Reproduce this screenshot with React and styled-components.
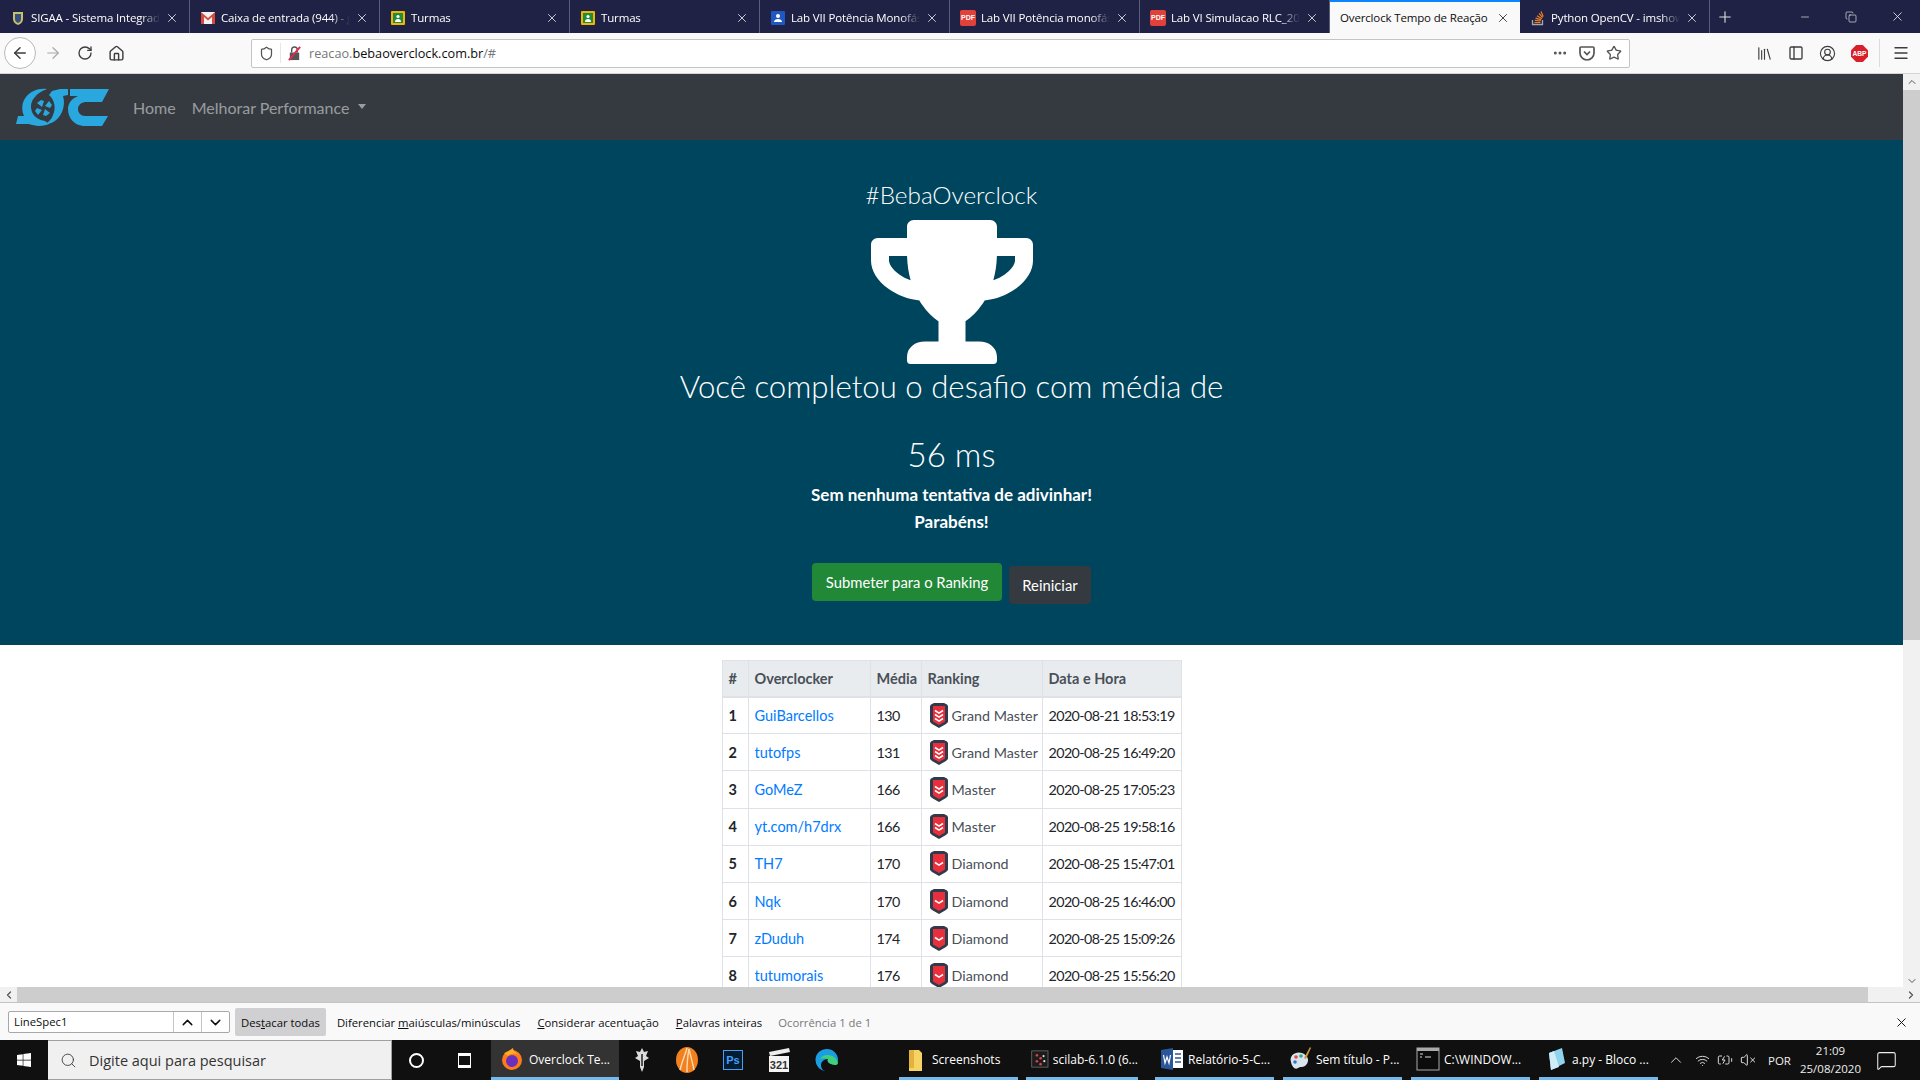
import styled, { createGlobalStyle } from "styled-components";
import { FaTrophy, FaWindows } from "react-icons/fa";
import {
    ArrowLeft,
    ArrowRight,
    RotateCw,
    Home as HomeIcon,
    Shield,
    Star,
    Ellipsis,
    Library,
    PanelLeft,
    CircleUserRound,
    Menu,
    X,
    Plus,
    Minus,
    Copy,
    ChevronUp,
    ChevronDown,
    ChevronLeft,
    ChevronRight,
    Search,
    Wifi,
    BatteryCharging,
    VolumeX,
    MessageSquare,
} from "lucide-react";

const UI_FONT = `"Open Sans", "Noto Sans", sans-serif`;
const PAGE_FONT = `Lato, "Open Sans", sans-serif`;

const GlobalStyle = createGlobalStyle`
    html, body {
        margin: 0;
        padding: 0;
        overflow: hidden;
        background: #fff;
    }
`;

const tabs = [
    { title: "SIGAA - Sistema Integrado", icon: "sigaa" },
    { title: "Caixa de entrada (944) - gmail", icon: "gmail" },
    { title: "Turmas", icon: "classroom" },
    { title: "Turmas", icon: "classroom" },
    { title: "Lab VII Potência Monofásica", icon: "doc" },
    { title: "Lab VII Potência monofásica", icon: "pdf" },
    { title: "Lab VI Simulacao RLC_2020", icon: "pdf" },
    { title: "Overclock Tempo de Reação", icon: "none", active: true },
    { title: "Python OpenCV - imshow", icon: "stack" },
];

const ranking = [
    ["GuiBarcellos", 130, "Grand Master", 3, "2020-08-21 18:53:19"],
    ["tutofps", 131, "Grand Master", 3, "2020-08-25 16:49:20"],
    ["GoMeZ", 166, "Master", 2, "2020-08-25 17:05:23"],
    ["yt.com/h7drx", 166, "Master", 2, "2020-08-25 19:58:16"],
    ["TH7", 170, "Diamond", 1, "2020-08-25 15:47:01"],
    ["Nqk", 170, "Diamond", 1, "2020-08-25 16:46:00"],
    ["zDuduh", 174, "Diamond", 1, "2020-08-25 15:09:26"],
    ["tutumorais", 176, "Diamond", 1, "2020-08-25 15:56:20"],
];

const taskApps = [
    { label: "Screenshots", icon: "folder", width: 119, gap: 0 },
    { label: "scilab-6.1.0 (6...", icon: "scilab", width: 112, gap: 8 },
    { label: "Relatório-5-C...", icon: "word", width: 119, gap: 17 },
    { label: "Sem título - P...", icon: "paint", width: 119, gap: 9 },
    { label: "C:\\WINDOW...", icon: "cmd", width: 119, gap: 9 },
    { label: "a.py - Bloco ...", icon: "notepad", width: 119, gap: 9 },
];

const Favicon = ({ kind }) => {
    if (kind === "none") return null;
    if (kind === "pdf") {
        return (
            <PdfIcon>PDF</PdfIcon>
        );
    }
    return (
        <svg width="16" height="16" viewBox="0 0 16 16">
            {kind === "sigaa" && (
                <>
                    <path d="M3 2h10v7c0 3-2 5-5 6-3-1-5-3-5-6z" fill="#c9c06a" />
                    <path d="M5 4h6v5c0 2-1 3-3 4-2-1-3-2-3-4z" fill="#33507e" />
                </>
            )}
            {kind === "gmail" && (
                <>
                    <rect x="1" y="2" width="14" height="12" fill="#f2f2f2" />
                    <path d="M1 2l7 6 7-6v12h-3V7L8 10.5 4 7v7H1z" fill="#d54c3f" />
                </>
            )}
            {kind === "classroom" && (
                <>
                    <rect x="1" y="1" width="14" height="14" rx="1" fill="#f4b400" />
                    <rect x="3" y="3" width="10" height="10" fill="#1e8e3e" />
                    <circle cx="8" cy="6.5" r="1.6" fill="#fff" />
                    <path d="M5 12c0-2 1-3 3-3s3 1 3 3z" fill="#fff" />
                </>
            )}
            {kind === "doc" && (
                <>
                    <rect x="1" y="1" width="14" height="14" rx="1" fill="#1f57c3" />
                    <circle cx="8" cy="6" r="2" fill="#fff" />
                    <path d="M4 12c0-2 2-3 4-3s4 1 4 3z" fill="#fff" />
                </>
            )}
            {kind === "stack" && (
                <>
                    <path d="M2.5 10v4.5h10V10" fill="none" stroke="#a8a8a8" strokeWidth="1.3" />
                    <path d="M4.5 12.5h6M4.8 10.4l5.8.6M5.6 8.2l5.5 1.6M7 5.8l4.8 3M9 3.4l3.6 4.2M11 1.5l2.2 5" stroke="#f48024" strokeWidth="1.2" fill="none" />
                </>
            )}
        </svg>
    );
};

const RankBadge = ({ tier }) => {
    const rows = Array.from({ length: tier }, (_, i) => i);
    const start = 11.5 - (tier - 1) * 2;
    return (
        <BadgeSvg viewBox="0 0 18 25">
            <path d="M1 1.5 4 0h10l3 1.5L18 3v16l-2 2-7 4-7-4-2-2V3z" fill="#2f3a4c" />
            <path d="M3 3h12v15.5L9 22l-6-3.5z" fill="#e8303c" />
            {rows.map((i) => (
                <path
                    key={i}
                    d={`M5 ${start + i * 4}l4 2.6 4-2.6`}
                    fill="none"
                    stroke="#fff"
                    strokeWidth="1.6"
                />
            ))}
        </BadgeSvg>
    );
};

const Logo = () => (
    <LogoSvg viewBox="0 0 93 39">
        <path
            d="M10 9C15 3 22 0 31 1C25 3 21 6 19 9C15 13 14 18 16 24C18 29 23 32 29 33L33 36C26 39 18 38 13 36H0L2 28H8C5 21 6 14 10 9Z"
            fill="#29a8e0"
        />
        <path
            d="M36 3L44 1H52V7L47 8C49 14 48 23 43 29C39 34 34 36 29 37C33 33 36 31 37 27C40 21 39 12 33 7Z"
            fill="#29a8e0"
        />
        <g fill="#29a8e0">
            <path d="M26 19L21 15L25 12L28 13Z" />
            <path d="M29 18L33 13L36 17L34 20Z" />
            <path d="M29 21L34 25L30 28L27 27Z" />
            <path d="M26 22L22 27L19 23L21 20Z" />
        </g>
        <path
            d="M54 1H93L86 14H69C64 15 62 18 62 21C62 25 65 28 69 28H92L86 38H67C58 37 52 30 52 21C52 16 55 11 62 8H54Z"
            fill="#29a8e0"
        />
    </LogoSvg>
);

const TaskIcon = ({ kind }) => (
    <svg width="24" height="24" viewBox="0 0 24 24">
        {kind === "folder" && (
            <>
                <path d="M5 3h10l3 3v18H5z" fill="#f6d365" />
                <path d="M5 3h5v18H5z" fill="#e3b23c" />
            </>
        )}
        {kind === "scilab" && (
            <>
                <rect x="1" y="1" width="22" height="22" fill="#1c1c1c" stroke="#777" />
                <g fill="#d6404a">
                    <circle cx="8" cy="7" r="1.800" />
                    <circle cx="13" cy="11" r="1.800" />
                    <circle cx="8" cy="15" r="1.800" />
                    <circle cx="13" cy="19" r="1.800" />
                </g>
                <g fill="#ddd">
                    <circle cx="17" cy="8" r="1.500" />
                    <circle cx="18" cy="15" r="1.500" />
                </g>
            </>
        )}
        {kind === "word" && (
            <>
                <rect x="8" y="3" width="15" height="18" fill="#fff" />
                <path d="M1 3l12-2v22L1 21z" fill="#2b579a" />
                <path d="M3.500 8l1.500 8 2-6 2 6 1.500-8" fill="none" stroke="#fff" strokeWidth="1.200" />
                <path d="M15 7h6M15 11h6M15 15h6" stroke="#2b579a" strokeWidth="1.500" />
            </>
        )}
        {kind === "paint" && (
            <>
                <path d="M3 15C1 8 8 4 14 6c6 2 8 8 4 12-3 3-5 1-8 3-3 2-6-1-7-6z" fill="#d8e4ee" />
                <circle cx="8" cy="10" r="1.800" fill="#e44" />
                <circle cx="13" cy="9" r="1.800" fill="#3a7" />
                <circle cx="7" cy="15" r="1.800" fill="#37c" />
                <path d="M22 0l-6 11 2 1 5-11z" fill="#c89640" />
            </>
        )}
        {kind === "cmd" && (
            <>
                <rect x="1" y="1" width="22" height="22" fill="#0c0c0c" stroke="#aaa" />
                <rect x="1" y="1" width="22" height="3" fill="#aaa" />
                <path d="M4 7h3M4 10h2M9 10h6" stroke="#ddd" strokeWidth="1" />
            </>
        )}
        {kind === "notepad" && (
            <>
                <path d="M5 6l13-5 3 15-14 7z" fill="#8fd3ee" />
                <path d="M5 6l5-2 5 16-8 3z" fill="#cfeef8" />
            </>
        )}
    </svg>
);

const App = () => {
    return (
        <Screen>
            <GlobalStyle />

            <TabBar>
                {tabs.map((tab, i) => (
                    <Tab key={i} $active={tab.active}>
                        <Favicon kind={tab.icon} />
                        <TabTitle $active={tab.active}>{tab.title}</TabTitle>
                        <X size={14} strokeWidth={1.3} />
                    </Tab>
                ))}
                <NewTab>
                    <Plus size={18} strokeWidth={1.500} />
                </NewTab>
                <WindowControls>
                    <Minus size={12} strokeWidth={1.300} />
                    <Copy size={12} strokeWidth={1.300} />
                    <X size={15} strokeWidth={1.300} />
                </WindowControls>
            </TabBar>

            <Toolbar>
                <BackButton>
                    <ArrowLeft size={18} strokeWidth={2} />
                </BackButton>
                <ToolIcon $w={33} $muted>
                    <ArrowRight size={18} strokeWidth={1.600} />
                </ToolIcon>
                <ToolIcon $w={31}>
                    <RotateCw size={16} strokeWidth={2} />
                </ToolIcon>
                <ToolIcon $w={33}>
                    <HomeIcon size={17} strokeWidth={2} />
                </ToolIcon>
                <UrlBar>
                    <Shield size={15} strokeWidth={2} />
                    <UrlDivider />
                    <InsecureLock viewBox="0 0 16 16">
                        <path d="M3 7h10v8H3z" fill="#555" />
                        <path d="M5 7V4a3 3 0 016 0v3" fill="none" stroke="#555" strokeWidth="1.500" />
                        <path d="M2 15L14 1" stroke="#e22850" strokeWidth="2" />
                    </InsecureLock>
                    <UrlText>
                        reacao.<strong>bebaoverclock.com.br</strong>/#
                    </UrlText>
                    <UrlActions>
                        <Ellipsis size={16} strokeWidth={2.500} />
                        <PocketIcon viewBox="0 0 16 16">
                            <path d="M2 2h12a1 1 0 011 1v5a7 7 0 01-14 0V3a1 1 0 011-1z" fill="none" stroke="#555" strokeWidth="1.700" />
                            <path d="M5 6.500l3 3 3-3" fill="none" stroke="#555" strokeWidth="1.700" />
                        </PocketIcon>
                        <Star size={16} strokeWidth={2} />
                    </UrlActions>
                </UrlBar>
                <ToolGroup>
                    <Library size={17} strokeWidth={1.600} />
                    <PanelLeft size={16} strokeWidth={2} />
                    <CircleUserRound size={17} strokeWidth={1.600} />
                    <AbpIcon viewBox="0 0 18 18">
                        <path d="M5.500 0h7L18 5.500v7L12.500 18h-7L0 12.500v-7z" fill="#d9202a" />
                        <text x="9" y="11.500" textAnchor="middle" fontSize="7" fontWeight="700" fill="#fff" fontFamily="Liberation Sans, sans-serif">ABP</text>
                    </AbpIcon>
                </ToolGroup>
                <ToolDivider />
                <MenuSlot>
                    <Menu size={18} strokeWidth={1.800} />
                </MenuSlot>
            </Toolbar>

            <Viewport>
                <Page>
                    <Navbar>
                        <Logo />
                        <NavLink>Home</NavLink>
                        <NavLink>
                            Melhorar Performance
                            <Caret />
                        </NavLink>
                    </Navbar>

                    <Hero>
                        <HeroTag>#BebaOverclock</HeroTag>
                        <Trophy />
                        <HeroTitle>Você completou o desafio com média de</HeroTitle>
                        <HeroScore>56 ms</HeroScore>
                        <HeroNote>Sem nenhuma tentativa de adivinhar!</HeroNote>
                        <HeroNote>Parabéns!</HeroNote>
                        <HeroButtons>
                            <SubmitButton>Submeter para o Ranking</SubmitButton>
                            <RestartButton>Reiniciar</RestartButton>
                        </HeroButtons>
                    </Hero>

                    <RankTable>
                        <colgroup>
                            <col width="26" />
                            <col width="122" />
                            <col width="51" />
                            <col width="121" />
                            <col width="139" />
                        </colgroup>
                        <thead>
                            <tr>
                                <th>#</th>
                                <th>Overclocker</th>
                                <th>Média</th>
                                <th>Ranking</th>
                                <th>Data e Hora</th>
                            </tr>
                        </thead>
                        <tbody>
                            {ranking.map((row, i) => (
                                <tr key={row[0]}>
                                    <RowNumber>{i + 1}</RowNumber>
                                    <td>
                                        <PlayerLink>{row[0]}</PlayerLink>
                                    </td>
                                    <NumberCell>{row[1]}</NumberCell>
                                    <td>
                                        <RankCell>
                                            <RankBadge tier={row[3]} />
                                            {row[2]}
                                        </RankCell>
                                    </td>
                                    <NumberCell>{row[4]}</NumberCell>
                                </tr>
                            ))}
                        </tbody>
                    </RankTable>
                </Page>

                <VScroll>
                    <ChevronUp size={12} strokeWidth={2} />
                    <VThumb />
                    <ChevronDown size={12} strokeWidth={2} />
                </VScroll>
            </Viewport>

            <HScroll>
                <ChevronLeft size={12} strokeWidth={2.500} />
                <HThumb />
                <ChevronRight size={12} strokeWidth={2.500} />
            </HScroll>

            <FindBar>
                <FindInput>
                    <FindValue>LineSpec1</FindValue>
                    <FindArrow>
                        <ChevronUp size={17} strokeWidth={2} />
                    </FindArrow>
                    <FindArrow>
                        <ChevronDown size={17} strokeWidth={2} />
                    </FindArrow>
                </FindInput>
                <FindToggle $on>
                    Des<u>t</u>acar todas
                </FindToggle>
                <FindToggle>
                    Diferenciar <u>m</u>aiúsculas/minúsculas
                </FindToggle>
                <FindToggle>
                    <u>C</u>onsiderar acentuação
                </FindToggle>
                <FindToggle>
                    <u>P</u>alavras inteiras
                </FindToggle>
                <FindCount>Ocorrência 1 de 1</FindCount>
                <FindClose>
                    <X size={15} strokeWidth={1.500} />
                </FindClose>
            </FindBar>

            <Taskbar>
                <StartButton>
                    <FaWindows size={16} color="#fff" />
                </StartButton>
                <SearchBox>
                    <Search size={17} strokeWidth={1.200} />
                    Digite aqui para pesquisar
                </SearchBox>
                <TaskSlot $w={48}>
                    <Cortana />
                </TaskSlot>
                <TaskSlot $w={48}>
                    <TaskView />
                </TaskSlot>
                <ActiveApp>
                    <FirefoxIcon viewBox="0 0 24 24">
                        <circle cx="12" cy="13" r="10" fill="#ff7a1a" />
                        <circle cx="12" cy="14" r="6" fill="#6b2fbe" />
                        <path d="M4 6c3 0 5-2 9-5 0 3 2 4 6 7-4-2-8-2-11 1z" fill="#ffb020" />
                    </FirefoxIcon>
                    Overclock Te...
                </ActiveApp>
                <PinnedIcons>
                    <svg width="18" height="26" viewBox="0 0 18 26">
                        <path d="M9 1l2 4 4-1-2 5 3 2-5 3v6l-2 5-2-5v-6l-5-3 3-2-2-5 4 1z" fill="#ddd" />
                        <path d="M9 7v12" stroke="#222" strokeWidth="1.500" />
                    </svg>
                    <svg width="24" height="28" viewBox="0 0 24 28">
                        <ellipse cx="12" cy="14" rx="11" ry="13" fill="#f08020" />
                        <path d="M5 24C8 12 11 7 12 2M12 26C12 16 13 8 14 3M19 24C17 14 15 8 14 3" stroke="#ffd9a8" strokeWidth="1.400" fill="none" />
                    </svg>
                    <PhotoshopIcon>Ps</PhotoshopIcon>
                    <svg width="24" height="26" viewBox="0 0 24 26">
                        <path d="M2 5l20-4 1 4-20 4z" fill="#eee" />
                        <rect x="2" y="9" width="20" height="16" fill="#f4f4f4" />
                        <text x="12" y="22" textAnchor="middle" fontSize="11" fontWeight="700" fill="#333" fontFamily="Liberation Sans, sans-serif">321</text>
                    </svg>
                    <svg width="24" height="24" viewBox="0 0 24 24">
                        <path d="M12 1a11 11 0 0111 11c0 3-3 5-7 4-3-1-4-3-3-5-4 0-7 3-7 6 0 3 2 6 5 6A11 11 0 1112 1z" fill="#1b9de2" />
                        <path d="M5 11c2-4 10-6 15-1 2 2 3 4 3 5 0 2-3 3-7 1-3-1-4-3-3-5-3-1-6-1-8 0z" fill="#3fd17a" />
                    </svg>
                </PinnedIcons>
                {taskApps.map((app) => (
                    <TaskApp key={app.label} $w={app.width} $gap={app.gap}>
                        <TaskIcon kind={app.icon} />
                        {app.label}
                    </TaskApp>
                ))}
                <Tray>
                    <ChevronUp size={18} strokeWidth={1.200} />
                    <Wifi size={15} strokeWidth={1.400} />
                    <BatteryCharging size={16} strokeWidth={1.400} />
                    <VolumeX size={16} strokeWidth={1.400} />
                    <TrayLang>POR</TrayLang>
                    <Clock>
                        <span>21:09</span>
                        <span>25/08/2020</span>
                    </Clock>
                    <MessageSquare size={21} strokeWidth={1.200} />
                </Tray>
            </Taskbar>
        </Screen>
    );
};

const Screen = styled.div`
    width: 1920px;
    height: 1080px;
    display: flex;
    flex-direction: column;
    overflow: hidden;
    font-family: ${UI_FONT};
`;

const TabBar = styled.div`
    height: 33px;
    flex: none;
    display: flex;
    background: #1f2244;
    color: #fff;
    font-size: 11.5px;
    letter-spacing: -0.15px;
`;

const Tab = styled.div`
    width: 190px;
    box-sizing: border-box;
    padding: ${(p) => (p.$active ? "0" : "2px")} 10px 0 10px;
    display: flex;
    align-items: center;
    gap: 5px;
    background: ${(p) => (p.$active ? "#f9f9fa" : "transparent")};
    color: ${(p) => (p.$active ? "#0c0c0d" : "#fff")};
    border-top: ${(p) => (p.$active ? "2px solid #0a84ff" : "none")};
    border-right: ${(p) => (p.$active ? "none" : "1px solid #5b5e78")};

    svg {
        flex: none;
    }
`;

const TabTitle = styled.span`
    flex: 1;
    white-space: nowrap;
    overflow: hidden;
    mask-image: ${(p) =>
        p.$active ? "none" : "linear-gradient(to right, #000 85%, transparent)"};
`;

const PdfIcon = styled.span`
    width: 16px;
    height: 16px;
    flex: none;
    border-radius: 2px;
    background: #e2403a;
    color: #fff;
    font: 700 7px/16px "Liberation Sans", sans-serif;
    letter-spacing: 0;
    text-align: center;
`;

const NewTab = styled.div`
    width: 30px;
    display: flex;
    align-items: center;
    justify-content: center;
    color: #ddd;
`;

const WindowControls = styled.div`
    margin-left: auto;
    width: 150px;
    padding: 0 15px 0 29px;
    box-sizing: border-box;
    display: flex;
    align-items: center;
    justify-content: space-between;
    color: #eee;
`;

const Toolbar = styled.div`
    height: 41px;
    flex: none;
    box-sizing: border-box;
    display: flex;
    align-items: center;
    padding-left: 4px;
    background: #f9f9fa;
    border-bottom: 1px solid #d4d4d6;
    color: #3d3d3f;
`;

const BackButton = styled.div`
    width: 32px;
    height: 32px;
    box-sizing: border-box;
    flex: none;
    border-radius: 50%;
    border: 1px solid #b9b9bb;
    background: #fff;
    display: flex;
    align-items: center;
    justify-content: center;
`;

const ToolIcon = styled.div`
    width: ${(p) => p.$w}px;
    flex: none;
    display: flex;
    justify-content: center;
    color: ${(p) => (p.$muted ? "#a8a8aa" : "inherit")};
`;

const UrlBar = styled.div`
    margin-left: 118px;
    width: 1379px;
    height: 29px;
    box-sizing: border-box;
    flex: none;
    display: flex;
    align-items: center;
    padding: 0 7px;
    background: #fff;
    border: 1px solid #c4c4c6;
    border-radius: 2px;
    color: #555;
`;

const UrlDivider = styled.span`
    width: 1px;
    height: 20px;
    margin: 0 6px;
    background: #e6e6e7;
`;

const InsecureLock = styled.svg`
    width: 15px;
    height: 15px;
`;

const UrlText = styled.span`
    margin-left: 7px;
    font-size: 12.7px;
    color: #77777a;

    strong {
        font-weight: 400;
        color: #0c0c0d;
    }
`;

const UrlActions = styled.div`
    margin-left: auto;
    display: flex;
    align-items: center;
    gap: 11px;
`;

const PocketIcon = styled.svg`
    width: 16px;
    height: 16px;
`;

const ToolGroup = styled.div`
    margin-left: 126px;
    display: flex;
    align-items: center;
    gap: 15px;
`;

const AbpIcon = styled.svg`
    width: 17px;
    height: 17px;
`;

const ToolDivider = styled.span`
    width: 1px;
    height: 28px;
    margin-left: 11px;
    background: #dcdcde;
`;

const MenuSlot = styled.div`
    margin-left: 12px;
    display: flex;
`;

const Viewport = styled.div`
    flex: 1;
    min-height: 0;
    display: flex;
`;

const Page = styled.div`
    flex: 1;
    min-width: 0;
    overflow: hidden;
    background: #fff;
    font-family: ${PAGE_FONT};
`;

const Navbar = styled.nav`
    height: 66px;
    display: flex;
    align-items: center;
    padding-left: 16px;
    background: #343a40;
`;

const LogoSvg = styled.svg`
    width: 93px;
    height: 39px;
    margin-right: 24px;
`;

const NavLink = styled.a`
    margin-right: 16px;
    display: flex;
    align-items: center;
    font-size: 16px;
    color: rgba(255, 255, 255, 0.5);
`;

const Caret = styled.span`
    margin-left: 9px;
    margin-top: -2px;
    border-top: 5px solid rgba(255, 255, 255, 0.5);
    border-left: 4.5px solid transparent;
    border-right: 4.5px solid transparent;
`;

const Hero = styled.section`
    height: 505px;
    box-sizing: border-box;
    padding-top: 38px;
    display: flex;
    flex-direction: column;
    align-items: center;
    background: #00455e;
    color: #fff;
`;

const HeroTag = styled.h5`
    margin: 0 0 8px;
    font-size: 24.3px;
    font-weight: 300;
    line-height: 34px;
`;

const Trophy = styled(FaTrophy)`
    width: 162px;
    height: 144px;
    flex: none;
    color: #fff;
`;

const HeroTitle = styled.h3`
    margin: 0;
    font-size: 31.2px;
    font-weight: 300;
    line-height: 44px;
`;

const HeroScore = styled.h3`
    margin: 24px 0 5px;
    font-size: 33px;
    font-weight: 300;
    line-height: 44px;
`;

const HeroNote = styled.p`
    margin: 0;
    font-size: 17px;
    font-weight: 700;
    line-height: 27px;
`;

const HeroButtons = styled.div`
    margin-top: 28px;
    display: flex;
    gap: 7px;
`;

const SubmitButton = styled.button`
    width: 190px;
    height: 38px;
    padding: 0;
    border: 0;
    border-radius: 4px;
    background: #218838;
    color: #fff;
    font: 400 14.8px ${PAGE_FONT};
`;

const RestartButton = styled(SubmitButton)`
    width: 82px;
    margin-top: 3px;
    background: #343a40;
`;

const RankTable = styled.table`
    width: 459px;
    margin: 15px auto 0;
    table-layout: fixed;
    border-collapse: collapse;
    font-size: 14.5px;
    color: #212529;

    th,
    td {
        box-sizing: border-box;
        height: 37.2px;
        padding: 0 6px;
        border: 1px solid #dee2e6;
        white-space: nowrap;
        text-align: left;
    }

    th {
        height: 36px;
        background: #e9ecef;
        border-bottom-width: 2px;
        color: #495057;
        font-weight: 700;
    }
`;

const RowNumber = styled.td`
    font-weight: 700;
`;

const NumberCell = styled.td`
    font-size: 14.3px;
    letter-spacing: -0.6px;
`;

const PlayerLink = styled.a`
    color: #007bff;
`;

const RankCell = styled.span`
    display: flex;
    align-items: center;
    gap: 4px;
    padding-left: 2px;
    font-size: 14.3px;
    color: #495057;
`;

const BadgeSvg = styled.svg`
    width: 18px;
    height: 25px;
    flex: none;
`;

const VScroll = styled.div`
    width: 17px;
    flex: none;
    display: flex;
    flex-direction: column;
    align-items: center;
    padding-top: 2px;
    background: #f1f1f1;
    color: #555;
`;

const VThumb = styled.div`
    width: 100%;
    height: 550px;
    margin: 2px 0 auto;
    background: #cdcdcd;
`;

const HScroll = styled.div`
    height: 15px;
    flex: none;
    display: flex;
    align-items: center;
    background: #f1f1f1;
    color: #555;
    padding: 0 3px;
`;

const HThumb = styled.div`
    height: 100%;
    flex: 1;
    margin: 0 37px 0 2px;
    background: #cdcdcd;
`;

const FindBar = styled.div`
    height: 38px;
    flex: none;
    box-sizing: border-box;
    display: flex;
    align-items: center;
    padding: 1px 0 0 8px;
    border-top: 1px solid #c4c4c6;
    background: #f9f9fa;
    color: #0c0c0d;
    font-size: 11.3px;
`;

const FindInput = styled.div`
    width: 222px;
    height: 22px;
    box-sizing: border-box;
    display: flex;
    align-items: stretch;
    border: 1px solid #a8a8aa;
    border-radius: 2px;
    background: #fff;
`;

const FindValue = styled.span`
    flex: 1;
    padding-left: 5px;
    line-height: 20px;
`;

const FindArrow = styled.span`
    width: 27px;
    display: flex;
    align-items: center;
    justify-content: center;
    border-left: 1px solid #c4c4c6;
`;

const FindToggle = styled.span`
    height: 28px;
    margin-left: 5px;
    padding: 0 6px;
    display: flex;
    align-items: center;
    white-space: pre;
    border-radius: 2px;
    background: ${(p) => (p.$on ? "#d0d0d2" : "transparent")};
`;

const FindCount = styled.span`
    margin-left: 10px;
    color: #77777a;
`;

const FindClose = styled.span`
    margin-left: auto;
    margin-right: 11px;
    display: flex;
`;

const Taskbar = styled.div`
    height: 40px;
    flex: none;
    display: flex;
    background: #101010;
    color: #fff;
    font-size: 12px;
`;

const StartButton = styled.div`
    width: 48px;
    flex: none;
    display: flex;
    align-items: center;
    justify-content: center;
`;

const SearchBox = styled.div`
    width: 344px;
    flex: none;
    box-sizing: border-box;
    display: flex;
    align-items: center;
    gap: 12px;
    padding-left: 12px;
    background: #f0f0f0;
    border: 1px solid #a0a0a0;
    border-width: 1px 1px 1px 0;
    color: #333;
    font-size: 14.500px;
`;

const TaskSlot = styled.div`
    width: ${(p) => p.$w}px;
    flex: none;
    display: flex;
    align-items: center;
    justify-content: center;
`;

const Cortana = styled.span`
    width: 15px;
    height: 15px;
    box-sizing: border-box;
    border-radius: 50%;
    border: 2px solid #fff;
`;

const TaskView = styled.span`
    width: 13px;
    height: 15px;
    box-sizing: border-box;
    border: solid #fff;
    border-width: 3px 1px;
`;

const ActiveApp = styled.div`
    width: 128px;
    margin-left: 3px;
    flex: none;
    box-sizing: border-box;
    display: flex;
    align-items: center;
    gap: 5px;
    padding: 1px 0 0 9px;
    background: #333;
    border-bottom: 3px solid #76b9ed;
`;

const FirefoxIcon = styled.svg`
    width: 24px;
    height: 24px;
`;

const PinnedIcons = styled.div`
    width: 280px;
    flex: none;
    box-sizing: border-box;
    display: flex;
    align-items: center;
    gap: 24px;
    padding-left: 14px;
`;

const PhotoshopIcon = styled.span`
    width: 20px;
    height: 20px;
    box-sizing: border-box;
    flex: none;
    border: 1px solid #4a9ff5;
    background: #001d34;
    color: #4a9ff5;
    font: 700 11px/18px "Liberation Sans", sans-serif;
    text-align: center;
`;

const TaskApp = styled.div`
    width: ${(p) => p.$w}px;
    margin-left: ${(p) => p.$gap}px;
    flex: none;
    box-sizing: border-box;
    display: flex;
    align-items: center;
    gap: 4px;
    padding: 1px 0 0 5px;
    white-space: nowrap;
    border-bottom: 3px solid #76b9ed;
`;

const Tray = styled.div`
    flex: 1;
    display: flex;
    align-items: center;
    gap: 7px;
    padding-left: 9px;
    color: #eee;

    svg:first-child {
        margin-right: 3px;
    }
`;

const TrayLang = styled.span`
    margin-left: 5px;
    font-size: 11.500px;
`;

const Clock = styled.div`
    margin-left: 2px;
    margin-right: 8px;
    display: flex;
    flex-direction: column;
    align-items: center;
    font-size: 11.500px;
    line-height: 18px;
`;

export default App;
